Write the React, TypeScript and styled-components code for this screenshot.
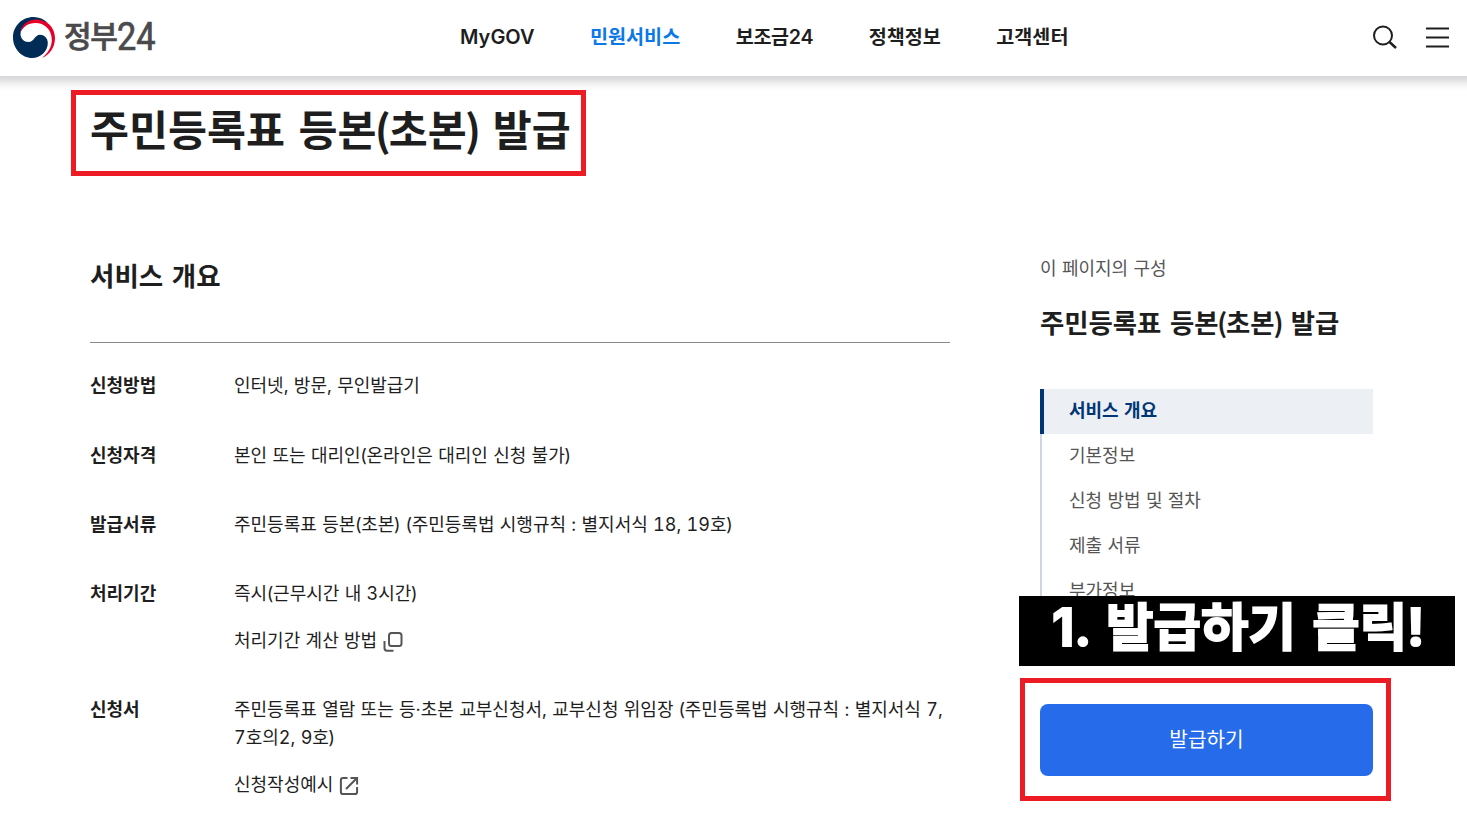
import React from 'react';
import styled, { createGlobalStyle } from 'styled-components';

const GlobalStyle = createGlobalStyle`
  * {
    box-sizing: border-box;
  }

  body {
    margin: 0;
    background: #fff;
    color: #1e1e1e;
    font-family: Inter, 'Noto Sans CJK KR', sans-serif;
    font-size: 18px;
    font-variant-numeric: tabular-nums;
    word-spacing: 0.5px;
    overflow: hidden;
  }
`;

const Page = styled.div`
  width: 1467px;
  height: 823px;
  overflow: hidden;
`;

const Header = styled.header`
  display: grid;
  grid-template-columns: 460px 1fr auto;
  align-items: center;
  height: 77px;
  padding: 0 18px 2px 0;
  border-bottom: 1px solid #d6d8e0;
  box-shadow: 0 -5px 10px 9px rgba(0, 0, 0, 0.2);
`;

const Logo = styled.a`
  display: flex;
  align-items: center;
  gap: 8px;
  padding: 1px 0 0 13px;
`;

const LogoText = styled.span`
  display: flex;
  align-items: baseline;
  margin-top: -5px;
  color: #4a4a4c;
  font-size: 30px;
  font-weight: 500;
  line-height: 40px;
  letter-spacing: -1.4px;
  -webkit-text-stroke: 0.7px #4a4a4c;
`;

const LogoNumber = styled.span`
  display: inline-block;
  margin-left: 1px;
  font-family: Roboto, sans-serif;
  font-size: 39px;
  font-weight: 400;
  letter-spacing: 0;
  transform: translateY(3px) scaleX(0.88);
  transform-origin: left;
`;

const Menu = styled.nav`
  display: flex;
  align-items: center;
  gap: 55.5px;
`;

const MenuItem = styled.a<{ $active?: boolean }>`
  color: ${({ $active }) => ($active ? '#0b78e8' : '#1e1e1e')};
  font-size: 19.6px;
  font-variant-numeric: normal;
  font-weight: 600;
  line-height: 30px;
  white-space: nowrap;

  &:first-child {
    font-size: 20px;
  }

  &:nth-child(3) {
    letter-spacing: -0.3px;
  }
`;

const Tools = styled.div`
  display: flex;
  align-items: center;
  gap: 29px;
`;

const Main = styled.main`
  padding: 13px 0 0 71px;
`;

const Paren = styled.span`
  margin: 0 -0.03em;
`;

const TitleFrame = styled.div`
  width: 515px;
  height: 86px;
  padding: 3px 0 0 14px;
  border: 5px solid #ed1c24;
`;

const Title = styled.h1`
  margin: 0;
  font-family: 'Noto Sans CJK KR', sans-serif;
  font-size: 42.4px;
  font-weight: 700;
  line-height: 60px;
  word-spacing: 4px;
  white-space: nowrap;

  ${Paren} {
    margin: 0 -0.045em;
  }
`;

const Columns = styled.div`
  display: grid;
  grid-template-columns: 860px 333px;
  column-gap: 90px;
  padding-left: 19px;
`;

const Overview = styled.section`
  padding-top: 80px;
`;

const SectionTitle = styled.h2`
  margin: 0;
  padding-bottom: 46px;
  border-bottom: 1px solid #8a8a8a;
  font-size: 26.5px;
  font-weight: 700;
  line-height: 40px;
  word-spacing: 1.5px;
`;

const InfoList = styled.dl`
  display: grid;
  row-gap: 41.3px;
  margin: 0;
  padding-top: 29.3px;
`;

const InfoRow = styled.div`
  display: grid;
  grid-template-columns: 144px 1fr;
  line-height: 28px;
`;

const InfoLabel = styled.dt`
  font-weight: 700;
`;

const InfoValue = styled.dd`
  margin: 0;
  white-space: pre-line;
`;

const InfoLink = styled.a`
  display: flex;
  align-items: center;
  gap: 6px;
  margin-top: 19px;

  svg {
    margin-top: 1px;
  }
`;

const Aside = styled.aside`
  padding-top: 79px;
`;

const AsideLabel = styled.p`
  margin: 0;
  color: #555;
  line-height: 28px;
`;

const AsideTitle = styled(Title)`
  margin: 19px 0 47px;
  font-size: 26.4px;
  line-height: 40px;
  word-spacing: 2.5px;
`;

const Contents = styled.ul`
  height: 207px;
  margin: 0;
  padding: 0;
  overflow: hidden;
  list-style: none;
`;

const ContentsItem = styled.li<{ $active?: boolean }>`
  height: 45px;
  padding-left: ${({ $active }) => ($active ? 25 : 27)}px;
  border-left: ${({ $active }) => ($active ? '4px solid #003675' : '2px solid #cdd7e4')};
  background: ${({ $active }) => ($active ? '#eceff4' : 'transparent')};
  color: ${({ $active }) => ($active ? '#003675' : '#555')};
  font-weight: ${({ $active }) => ($active ? 700 : 400)};
  line-height: 43px;
`;

const StepBanner = styled.div`
  width: 436px;
  height: 70px;
  margin-left: -21px;
  padding-left: 33px;
  background: #000;
  color: #fff;
  font-size: 51.6px;
  font-variant-numeric: normal;
  font-weight: 700;
  line-height: 62px;
  word-spacing: 4px;
  white-space: nowrap;
  -webkit-text-stroke: 2px #fff;
`;

const ButtonFrame = styled.div`
  width: 371px;
  height: 123px;
  margin: 12px 0 0 -20px;
  padding: 21px 13px 0 15px;
  border: 5px solid #ed1c24;
`;

const IssueButton = styled.button`
  width: 333px;
  height: 72px;
  padding: 0 0 3px;
  border: 0;
  border-radius: 8px;
  background: #256bea;
  color: #fff;
  font-family: inherit;
  font-size: 20.2px;
`;

const Emblem = () => (
  <svg width="43" height="42" viewBox="0 0 43 42">
    <path
      d="M35 6C31 2 26 0 20.500 0C9 0 0 9 0 20.500C0 32 9 41 19 41C28 41 34.800 34 34.800 26C34.800 21 31 17.800 27 17.800C21.500 17.800 21.500 25 15.500 25C11 25 7.500 21.500 7.500 17C7.500 9 15 4.500 23 4.500C28 4.500 33 5 35 6Z"
      fill="#002c56"
    />
    <path
      d="M7.500 16C8 8 15 2.400 23 2.400C34 2.400 42 10.500 42 21C42 31 36 38 29 41C35 36 38.800 30 38.800 23C38.800 12 31 6 22.500 6C15 6 9.500 10 7.500 16Z"
      fill="#e4002b"
    />
  </svg>
);

const SearchIcon = () => (
  <svg width="26" height="26" viewBox="0 0 26 26" fill="none" stroke="#1e1e1e" strokeWidth="2">
    <circle cx="12" cy="11.500" r="9" />
    <path d="M18.500 18L25 24" strokeWidth="2.400" />
  </svg>
);

const MenuIcon = () => (
  <svg width="23" height="22" viewBox="0 0 23 22" stroke="#1e1e1e" strokeWidth="2">
    <path d="M0 2.500H23M0 11.500H23M0 20.500H23" />
  </svg>
);

const PopupIcon = () => (
  <svg width="20" height="20" viewBox="0 0 20 20" fill="none" stroke="#555" strokeWidth="2">
    <rect x="6" y="1" width="12.500" height="13" rx="2.500" />
    <path d="M1.500 9V16Q1.500 18.800 4 18.800H10.500" />
  </svg>
);

const ExternalIcon = () => (
  <svg width="20" height="20" viewBox="0 0 20 20" fill="none" stroke="#555" strokeWidth="2">
    <path d="M8.500 1.900H4Q1.900 1.900 1.900 4V16Q1.900 18.100 4 18.100H16Q18.100 18.100 18.100 16V11" />
    <path d="M11.500 1.900H18.100V8.500M17.500 2.500L7 13" />
  </svg>
);

const menus = ['MyGOV', '민원서비스', '보조금24', '정책정보', '고객센터'];

const serviceName = '주민등록표 등본(초본) 발급';

const contents = ['서비스 개요', '기본정보', '신청 방법 및 절차', '제출 서류', '부가정보'];

type Info = {
  label: string;
  value: string;
  link?: string;
  icon?: React.ReactNode;
};

const infos: Info[] = [
  { label: '신청방법', value: '인터넷, 방문, 무인발급기' },
  { label: '신청자격', value: '본인 또는 대리인(온라인은 대리인 신청 불가)' },
  { label: '발급서류', value: '주민등록표 등본(초본) (주민등록법 시행규칙 : 별지서식 18, 19호)' },
  {
    label: '처리기간',
    value: '즉시(근무시간 내 3시간)',
    link: '처리기간 계산 방법',
    icon: <PopupIcon />,
  },
  {
    label: '신청서',
    value: '주민등록표 열람 또는 등·초본 교부신청서, 교부신청 위임장 (주민등록법 시행규칙 : 별지서식 7,\n7호의2, 9호)',
    link: '신청작성예시',
    icon: <ExternalIcon />,
  },
];

// tightens the brackets, which sit too loose between Hangul
const tightenParens = (text: string) =>
  text.split(/([()])/).map((part, index) =>
    part === '(' || part === ')' ? <Paren key={index}>{part}</Paren> : part,
  );

const App: React.FC = () => (
  <Page>
    <GlobalStyle />
    <Header>
      <Logo>
        <Emblem />
        <LogoText>
          정부<LogoNumber>24</LogoNumber>
        </LogoText>
      </Logo>
      <Menu>
        {menus.map((menu) => (
          <MenuItem key={menu} $active={menu === '민원서비스'}>
            {menu}
          </MenuItem>
        ))}
      </Menu>
      <Tools>
        <SearchIcon />
        <MenuIcon />
      </Tools>
    </Header>
    <Main>
      <TitleFrame>
        <Title>{tightenParens(serviceName)}</Title>
      </TitleFrame>
      <Columns>
        <Overview>
          <SectionTitle>서비스 개요</SectionTitle>
          <InfoList>
            {infos.map(({ label, value, link, icon }) => (
              <InfoRow key={label}>
                <InfoLabel>{label}</InfoLabel>
                <InfoValue>
                  {tightenParens(value)}
                  {link && (
                    <InfoLink>
                      {link}
                      {icon}
                    </InfoLink>
                  )}
                </InfoValue>
              </InfoRow>
            ))}
          </InfoList>
        </Overview>
        <Aside>
          <AsideLabel>이 페이지의 구성</AsideLabel>
          <AsideTitle as="h2">{tightenParens(serviceName)}</AsideTitle>
          <Contents>
            {contents.map((item, index) => (
              <ContentsItem key={item} $active={index === 0}>
                {item}
              </ContentsItem>
            ))}
          </Contents>
          <StepBanner>1. 발급하기 클릭!</StepBanner>
          <ButtonFrame>
            <IssueButton>발급하기</IssueButton>
          </ButtonFrame>
        </Aside>
      </Columns>
    </Main>
  </Page>
);

export default App;
